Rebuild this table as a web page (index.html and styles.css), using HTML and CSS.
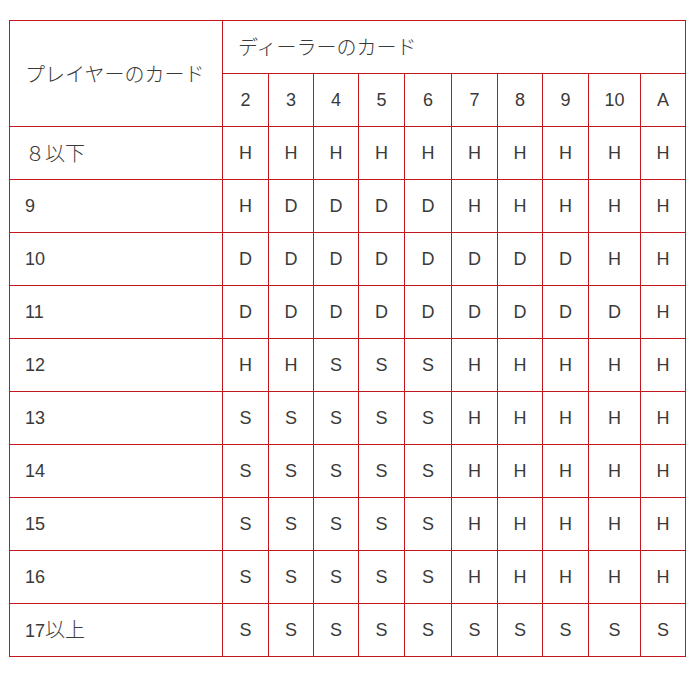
FILE: index.html
```html
<!DOCTYPE html>
<html lang="ja">
<head>
<meta charset="utf-8">
<link rel="stylesheet" href="styles.css">
</head>
<body>
<table class="chart">
  <colgroup>
    <col class="w213">
    <col class="w46"><col class="w45"><col class="w45"><col class="w46"><col class="w47"><col class="w46"><col class="w45"><col class="w46"><col class="w52"><col class="w45">
  </colgroup>
  <thead>
    <tr>
      <th class="label ja" rowspan="2">プレイヤーのカード</th>
      <th class="label ja" colspan="10">ディーラーのカード</th>
    </tr>
    <tr>
      <th>2</th><th>3</th><th>4</th><th>5</th><th>6</th><th>7</th><th>8</th><th>9</th><th>10</th><th>A</th>
    </tr>
  </thead>
  <tbody>
    <tr><td class="label ja">８以下</td><td>H</td><td>H</td><td>H</td><td>H</td><td>H</td><td>H</td><td>H</td><td>H</td><td>H</td><td>H</td></tr>
    <tr><td class="label">9</td><td>H</td><td>D</td><td>D</td><td>D</td><td>D</td><td>H</td><td>H</td><td>H</td><td>H</td><td>H</td></tr>
    <tr><td class="label">10</td><td>D</td><td>D</td><td>D</td><td>D</td><td>D</td><td>D</td><td>D</td><td>D</td><td>H</td><td>H</td></tr>
    <tr><td class="label">11</td><td>D</td><td>D</td><td>D</td><td>D</td><td>D</td><td>D</td><td>D</td><td>D</td><td>D</td><td>H</td></tr>
    <tr><td class="label">12</td><td>H</td><td>H</td><td>S</td><td>S</td><td>S</td><td>H</td><td>H</td><td>H</td><td>H</td><td>H</td></tr>
    <tr><td class="label">13</td><td>S</td><td>S</td><td>S</td><td>S</td><td>S</td><td>H</td><td>H</td><td>H</td><td>H</td><td>H</td></tr>
    <tr><td class="label">14</td><td>S</td><td>S</td><td>S</td><td>S</td><td>S</td><td>H</td><td>H</td><td>H</td><td>H</td><td>H</td></tr>
    <tr><td class="label">15</td><td>S</td><td>S</td><td>S</td><td>S</td><td>S</td><td>H</td><td>H</td><td>H</td><td>H</td><td>H</td></tr>
    <tr><td class="label">16</td><td>S</td><td>S</td><td>S</td><td>S</td><td>S</td><td>H</td><td>H</td><td>H</td><td>H</td><td>H</td></tr>
    <tr><td class="label">17<span class="ja">以上</span></td><td>S</td><td>S</td><td>S</td><td>S</td><td>S</td><td>S</td><td>S</td><td>S</td><td>S</td><td>S</td></tr>
  </tbody>
</table>
</body>
</html>
```
FILE: styles.css
```css
html, body {
  margin: 0;
  padding: 0;
  background: #ffffff;
}
body {
  font-family: "Liberation Sans", "Noto Sans CJK JP", sans-serif;
  font-size: 18px;
  color: #3a3a3a;
}
.chart {
  margin: 20px 0 0 9px;
  border-collapse: collapse;
  table-layout: fixed;
  width: 676px;
}
.w213 { width: 213px; }
.w45 { width: 45px; }
.w46 { width: 46px; }
.w47 { width: 47px; }
.w52 { width: 52px; }
.chart th,
.chart td {
  border: 1px solid #c4161c;
  height: 52px;
  padding: 0;
  text-align: center;
  vertical-align: middle;
  font-weight: normal;
  line-height: 22px;
}
.chart .label {
  text-align: left;
  padding-left: 15px;
}
.chart .ja {
  font-family: "Noto Sans CJK JP", sans-serif;
  font-size: 20px;
  font-weight: 300;
}
```
